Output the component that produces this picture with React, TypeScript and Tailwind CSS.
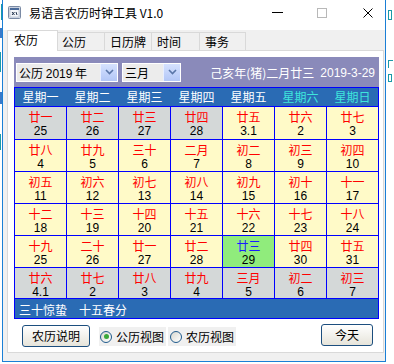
import React from "react";

type Cell = [string, string, "g" | "y" | "t"];

const rows: Cell[][] = [
  [["廿一", "25", "g"], ["廿二", "26", "g"], ["廿三", "27", "g"], ["廿四", "28", "g"], ["廿五", "3.1", "y"], ["廿六", "2", "y"], ["廿七", "3", "y"]],
  [["廿八", "4", "y"], ["廿九", "5", "y"], ["三十", "6", "y"], ["二月", "7", "y"], ["初二", "8", "y"], ["初三", "9", "y"], ["初四", "10", "y"]],
  [["初五", "11", "y"], ["初六", "12", "y"], ["初七", "13", "y"], ["初八", "14", "y"], ["初九", "15", "y"], ["初十", "16", "y"], ["十一", "17", "y"]],
  [["十二", "18", "y"], ["十三", "19", "y"], ["十四", "20", "y"], ["十五", "21", "y"], ["十六", "22", "y"], ["十七", "23", "y"], ["十八", "24", "y"]],
  [["十九", "25", "y"], ["二十", "26", "y"], ["廿一", "27", "y"], ["廿二", "28", "y"], ["廿三", "29", "t"], ["廿四", "30", "y"], ["廿五", "31", "y"]],
  [["廿六", "4.1", "g"], ["廿七", "2", "g"], ["廿八", "3", "g"], ["廿九", "4", "g"], ["三月", "5", "g"], ["初二", "6", "g"], ["初三", "7", "g"]],
];

const weekdays = ["星期一", "星期二", "星期三", "星期四", "星期五", "星期六", "星期日"];

function Chevron() {
  return (
    <svg width="9" height="6" viewBox="0 0 9 6">
      <path d="M1 1 L4.5 4.5 L8 1" fill="none" stroke="#5a76a8" strokeWidth="1.6" />
    </svg>
  );
}

function DayCell({ c }: { c: Cell }) {
  const bg = c[2] === "g" ? "bg-[#d4d8d8]" : c[2] === "t" ? "bg-[#90ec7c]" : "bg-[#fffac8]";
  const lc = c[2] === "t" ? "text-[#1a1aff]" : "text-[#ff0000]";
  return (
    <div className={`flex flex-col items-center ${bg}`}>
      <span className={`mt-[3px] text-[12px] leading-[14px] ${lc}`}>{c[0]}</span>
      <span className="mt-[1px] text-[12px] leading-[13px] text-black font-['Liberation_Sans',sans-serif]">{c[1]}</span>
    </div>
  );
}

function Radio({ checked, label, pl }: { checked: boolean; label: string; pl: string }) {
  return (
    <div className={`flex h-[19px] items-center bg-[#f0f0f0] ${pl} pr-[2px]`}>
      <div className="flex h-[12px] w-[12px] items-center justify-center rounded-full border border-[#1f5a8c] bg-linear-to-br from-[#d8d8d0] to-white">
        {checked && <div className="h-[5px] w-[5px] rounded-full bg-[#3aa83a]" />}
      </div>
      <span className="ml-[4px] text-[12px] leading-[14px] text-black">{label}</span>
    </div>
  );
}

export default function App() {
  return (
    <div className="flex h-[364px] w-[394px] overflow-hidden bg-white font-['Noto_Sans_CJK_SC',sans-serif]">
      {/* left background strip */}
      <div className="flex w-[2px] flex-col">
        <div className="ml-px mt-[4px] h-[16px] w-px bg-[#1a9aa8]" />
        <div className="mt-[8px] h-[10px] w-[2px] bg-[#3a7ac8]" />
        <div className="mt-[14px] h-[20px] w-px bg-[#1a9aa8]" />
        <div className="mt-[20px] h-[12px] w-[2px] bg-[#3a7ac8]" />
        <div className="mt-[30px] h-[16px] w-px bg-[#1a9aa8]" />
      </div>

      {/* window */}
      <div className="flex h-[362px] w-[384px] flex-col border-x border-b border-[#1a7fd6] bg-[#f0f0f0]">
        {/* title bar */}
        <div className="flex h-[30px] items-start bg-white pt-[4px]">
          <div className="flex h-[17px] w-full items-center">
            <svg className="ml-[5px]" width="13" height="13" viewBox="0 0 13 13">
              <rect x="0.5" y="0.5" width="12" height="12" rx="1" fill="#d6dde8" stroke="#7a8aa4" />
              <rect x="2" y="2" width="9" height="9" fill="#f4f6fa" stroke="#a8b4c8" strokeWidth="0.6" />
              <rect x="2" y="2" width="9" height="2" fill="#4a6a9a" />
              <path d="M4 6 L6.5 9 M6.5 6 L4 9 M8 6 L9 9" stroke="#22344e" strokeWidth="1" />
            </svg>
            <span className="ml-[8px] text-[12px] leading-[17px] text-black">易语言农历时钟工具 V1.0</span>
            <div className="ml-auto flex items-center">
              <div className="h-px w-[11px] bg-black" />
              <div className="ml-[34px] h-[10px] w-[10px] border border-[#b8b8b8]" />
              <svg className="ml-[36px] mr-[12px]" width="10" height="10" viewBox="0 0 10 10">
                <path d="M0.5 0.5 L9.5 9.5 M9.5 0.5 L0.5 9.5" stroke="#000" strokeWidth="1" />
              </svg>
            </div>
          </div>
        </div>

        {/* tabs */}
        <div className="flex h-[20px] items-start pl-[4px]">
          <div className="relative z-10 h-[21px] w-[51px] border-x border-t border-[#d9d9d9] bg-white pl-[6px] pt-px text-[12px] leading-[16px] text-black">
            农历
          </div>
          <div className="mt-[2px] h-[18px] w-[47px] border-r border-t border-[#d9d9d9] pl-[4px] pt-px text-[12px] leading-[16px] text-black">
            公历
          </div>
          <div className="mt-[2px] h-[18px] w-[47px] border-r border-t border-[#d9d9d9] pl-[5px] pt-px text-[12px] leading-[16px] text-black">
            日历牌
          </div>
          <div className="mt-[2px] h-[18px] w-[48px] border-r border-t border-[#d9d9d9] pl-[5px] pt-px text-[12px] leading-[16px] text-black">
            时间
          </div>
          <div className="mt-[2px] h-[18px] w-[46px] border-r border-t border-[#d9d9d9] pl-[5px] pt-px text-[12px] leading-[16px] text-black">
            事务
          </div>
        </div>

        {/* panel */}
        <div className="ml-[4px] flex h-[303px] w-[377px] flex-col border border-[#d9d9d9] bg-white pl-[6px] pt-[6px]">
          {/* purple header */}
          <div className="flex h-[30px] w-[365px] items-center bg-[#8a8aba] pl-[2px]">
            <div className="flex h-[19px] w-[102px] border border-white bg-[#ececec]">
              <span className="flex-1 pl-[2px] text-[12px] leading-[17px] text-black">
                公历 <span className="font-['Liberation_Sans',sans-serif]">2019</span> 年
              </span>
              <div className="flex w-[17px] items-center justify-center border-l border-[#e8eeff] bg-linear-to-b from-[#d6e2ff] to-[#b2c6f6]">
                <Chevron />
              </div>
            </div>
            <div className="ml-[4px] flex h-[19px] w-[59px] border border-white bg-[#ececec]">
              <span className="flex-1 pl-[2px] text-[12px] leading-[17px] text-black">三月</span>
              <div className="flex w-[17px] items-center justify-center border-l border-[#e8eeff] bg-linear-to-b from-[#d6e2ff] to-[#b2c6f6]">
                <Chevron />
              </div>
            </div>
            <div className="ml-auto mr-[4px] mt-px flex items-center text-white">
              <span className="text-[12px] leading-[16px]">己亥年(猪)二月廿三</span>
              <span className="ml-[6px] text-[12px] leading-[16px] font-['Liberation_Sans',sans-serif]">2019-3-29</span>
            </div>
          </div>

          {/* calendar grid */}
          <div className="flex w-[365px] flex-col gap-px border border-[#0000ff] bg-[#0000ff]">
            <div className="grid h-[18px] grid-cols-[repeat(7,51px)] gap-x-px bg-[#2a6bb4]">
              {weekdays.map((w, i) => (
                <div
                  key={w}
                  className={`flex items-center justify-center text-[12px] leading-[14px] ${i >= 5 ? "text-[#3ee6dc]" : "text-white"}`}
                >
                  {w}
                </div>
              ))}
            </div>
            <div className="grid grid-cols-[repeat(7,51px)] grid-rows-[32px_31px_31px_31px_31px_30px] gap-px bg-[#0000ff]">
              {rows.flat().map((c, i) => (
                <DayCell key={i} c={c} />
              ))}
            </div>
            <div className="flex h-[19px] items-center bg-[#2a6bb4] pl-[4px] pt-[2px] text-[12px] leading-[14px] text-white">
              <span>三十惊蛰</span>
              <span className="ml-[12px]">十五春分</span>
            </div>
          </div>

          {/* bottom controls */}
          <div className="flex flex-1 items-start">
            <div className="ml-[8px] mt-[6px] flex h-[22px] w-[68px] items-center justify-center rounded-[3px] border border-[#1c4e7e] bg-linear-to-b from-white to-[#e6e4da] text-[12px] leading-[14px] text-black">
              农历说明
            </div>
            <div className="ml-[9px] mt-[8px]">
              <Radio checked={true} label="公历视图" pl="pl-px" />
            </div>
            <div className="ml-[2px] mt-[8px]">
              <Radio checked={false} label="农历视图" pl="pl-[2px]" />
            </div>
            <div className="ml-auto mr-[10px] mt-[5px] flex h-[22px] w-[52px] items-center justify-center rounded-[3px] border border-[#1c4e7e] bg-linear-to-b from-white to-[#e6e4da] text-[12px] leading-[14px] text-black">
              今天
            </div>
          </div>
        </div>
      </div>

      {/* right background strip */}
      <div className="flex w-[8px] flex-col">
        <div className="ml-[2px] mt-[10px] h-[10px] w-[4px] border border-[#1a9aa8]" />
        <div className="ml-[2px] mt-[40px] h-[8px] w-[5px] border-l border-t border-[#1a9aa8]" />
        <div className="ml-[2px] mt-[6px] h-[8px] w-[4px] border border-[#1a9aa8]" />
      </div>
    </div>
  );
}
